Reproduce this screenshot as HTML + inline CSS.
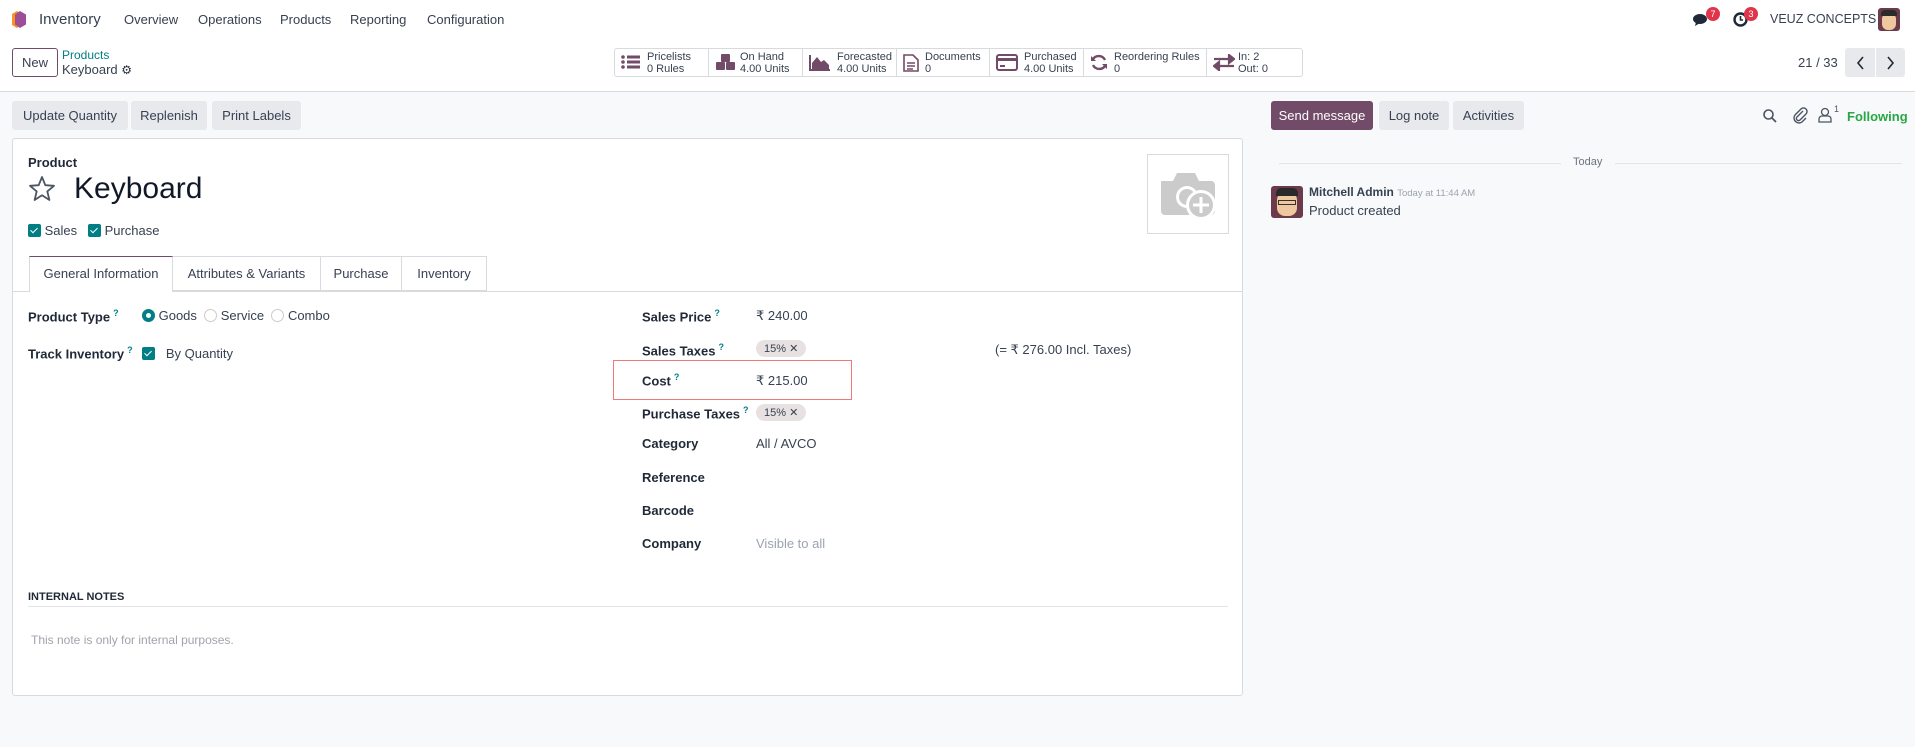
<!DOCTYPE html>
<html><head><meta charset="utf-8"><style>
*{box-sizing:border-box;margin:0;padding:0}
body{width:1915px;height:747px;background:#f8f9fa;font-family:"Liberation Sans",sans-serif;font-size:13px;color:#374151;position:relative;overflow:hidden}
.a{position:absolute;white-space:nowrap}
.top{position:absolute;left:0;top:0;width:1915px;height:92px;background:#fff;border-bottom:1px solid #d8dadd}
.btn{position:absolute;height:29px;line-height:29px;background:#e7e9ed;border-radius:3px;font-size:13px;color:#374151;white-space:nowrap;text-align:center}
.sheet{position:absolute;left:12px;top:138px;width:1231px;height:558px;background:#fff;border:1px solid #d8dadd;border-radius:3px}
.lbl{font-weight:bold;color:#1f2937}
.q{color:#017e84;font-size:9px;vertical-align:super;margin-left:3px}
.cb{display:inline-block;width:13px;height:13px;background:#017e84;border-radius:2px;vertical-align:-2px;position:relative}
.cb:after{content:"";position:absolute;left:4px;top:2px;width:3px;height:6px;border:solid #fff;border-width:0 1.5px 1.5px 0;transform:rotate(45deg)}
.tag{display:inline-block;background:#e8e1e1;border-radius:10px;padding:2px 8px;font-size:11px;color:#374151}
.stat{position:absolute;top:0;height:28px;border-right:1px solid #d8dadd;font-size:11px;line-height:12px;padding-top:2px}
.stat svg{position:absolute;left:6px;top:5px}
.stat div{position:absolute;left:34px;top:2px;color:#374151}
.tab{position:absolute;top:117px;height:35px;border:1px solid #d8dadd;border-left:none;text-align:center;line-height:34px;white-space:nowrap}
</style></head><body>
<div class="top">
<svg class="a" style="left:11px;top:10px" width="16" height="19" viewBox="0 0 16 19"><path d="M6 1 L12 4 V14 L6 18 L1 15 V4Z" fill="#f7931e"/><path d="M9 1 L15 4.5 V14.5 L9 18 L4 14.5 V4.5Z" fill="#9c4f96"/></svg>
<div class="a" style="left:39px;top:11px;font-size:15px;color:#374151">Inventory</div>
<div class="a" style="left:124px;top:12px">Overview</div>
<div class="a" style="left:198px;top:12px">Operations</div>
<div class="a" style="left:280px;top:12px">Products</div>
<div class="a" style="left:350px;top:12px">Reporting</div>
<div class="a" style="left:427px;top:12px">Configuration</div>
<svg class="a" style="left:1693px;top:13px" width="17" height="14" viewBox="0 0 17 14"><ellipse cx="7" cy="6" rx="7" ry="5" fill="#1f2937"/><path d="M3 9 L2 13 L7 10Z" fill="#1f2937"/></svg>
<div class="a" style="left:1706px;top:7px;width:14px;height:14px;border-radius:7px;background:#e0344b;color:#fff;font-size:9px;text-align:center;line-height:14px">7</div>
<svg class="a" style="left:1733px;top:12px" width="15" height="15" viewBox="0 0 15 15"><circle cx="7.5" cy="7.5" r="6" fill="none" stroke="#1f2937" stroke-width="2.4"/><path d="M7.5 4V8H10" stroke="#1f2937" stroke-width="1.6" fill="none"/></svg>
<div class="a" style="left:1744px;top:7px;width:14px;height:14px;border-radius:7px;background:#e0344b;color:#fff;font-size:9px;text-align:center;line-height:14px">3</div>
<div class="a" style="left:1770px;top:12px;font-size:12.5px;color:#374151">VEUZ CONCEPTS</div>
<div class="a" style="left:1878px;top:8px;width:22px;height:23px;border-radius:3px;background:#6b3b4b;overflow:hidden"><div style="position:absolute;left:4px;top:5px;width:14px;height:17px;border-radius:6px;background:#f0c8a0"></div><div style="position:absolute;left:3px;top:2px;width:16px;height:6px;border-radius:4px 4px 0 0;background:#2a2a2a"></div></div>

<div class="a" style="left:12px;top:48px;width:46px;height:29px;border:1px solid #714b67;border-radius:3px;text-align:center;line-height:27px;color:#374151">New</div>
<div class="a" style="left:62px;top:48px;font-size:12px;color:#017e84">Products</div>
<div class="a" style="left:62px;top:62px;font-size:13px">Keyboard <span style="font-size:12px;color:#1f2937">&#9881;</span></div>

<div class="a" style="left:614px;top:48px;width:689px;height:29px;border:1px solid #d8dadd;border-radius:3px">
<div class="stat" style="left:0;width:94px"><svg width="20" height="16"><g fill="#714b67"><circle cx="2" cy="3" r="1.8"/><circle cx="2" cy="8" r="1.8"/><circle cx="2" cy="13" r="1.8"/><rect x="6" y="1.5" width="13" height="3"/><rect x="6" y="6.5" width="13" height="3"/><rect x="6" y="11.5" width="13" height="3"/></g></svg><div style="left:32px">Pricelists<br>0 Rules</div></div>
<div class="stat" style="left:94px;width:94px"><svg width="22" height="18"><g fill="#714b67"><rect x="6" y="0" width="9" height="8" rx="1"/><rect x="1" y="8" width="9" height="8" rx="1"/><rect x="11" y="8" width="9" height="8" rx="1"/></g></svg><div style="left:31px">On Hand<br>4.00 Units</div></div>
<div class="stat" style="left:188px;width:94px"><svg width="22" height="17"><path d="M1 1V16H21" stroke="#714b67" stroke-width="2" fill="none"/><path d="M3 15 L3 9 L8 3 L12 8 L15 6 L20 11 V15Z" fill="#714b67"/></svg><div>Forecasted<br>4.00 Units</div></div>
<div class="stat" style="left:282px;width:93px"><svg width="16" height="18"><path d="M1 1H10L15 6V17H1Z M4 9H12M4 12H12M4 15H10" stroke="#714b67" stroke-width="1.6" fill="none"/></svg><div style="left:28px">Documents<br>0</div></div>
<div class="stat" style="left:375px;width:94px"><svg width="22" height="17"><rect x="1" y="1" width="20" height="15" rx="2" stroke="#714b67" stroke-width="2" fill="none"/><rect x="1" y="4" width="20" height="3" fill="#714b67"/><rect x="4" y="11" width="5" height="2" fill="#714b67"/></svg><div>Purchased<br>4.00 Units</div></div>
<div class="stat" style="left:469px;width:123px"><svg width="18" height="17"><path d="M15 6A7 7 0 0 0 3 5M3 11A7 7 0 0 0 15 12" stroke="#714b67" stroke-width="2.4" fill="none"/><path d="M1 2V7H6Z M17 15V10H12Z" fill="#714b67"/></svg><div style="left:30px">Reordering Rules<br>0</div></div>
<div class="stat" style="left:592px;width:96px;border:none"><svg width="22" height="17"><path d="M1 5H18M21 5L16 1V9Z M21 12H4M1 12L6 8V16Z" stroke="#714b67" stroke-width="2.2" fill="#714b67"/></svg><div style="left:31px">In: 2<br>Out: 0</div></div>
</div>

<div class="a" style="left:1798px;top:55px">21 / 33</div>
<div class="a" style="left:1845px;top:48px;width:30px;height:29px;background:#e7e9ed;border-radius:3px 0 0 3px"></div>
<div class="a" style="left:1876px;top:48px;width:29px;height:29px;background:#e7e9ed;border-radius:0 3px 3px 0"></div>
<svg class="a" style="left:1853px;top:55px" width="50" height="16"><path d="M10 2L5 8L10 14" stroke="#1f2937" stroke-width="1.6" fill="none"/><path d="M35 2L40 8L35 14" stroke="#1f2937" stroke-width="1.6" fill="none"/></svg>
</div>

<div class="btn" style="left:12px;top:101px;width:116px">Update Quantity</div>
<div class="btn" style="left:131px;top:101px;width:76px">Replenish</div>
<div class="btn" style="left:212px;top:101px;width:89px">Print Labels</div>

<div class="btn" style="left:1271px;top:101px;width:102px;background:#714b67;color:#fff">Send message</div>
<div class="btn" style="left:1379px;top:101px;width:70px">Log note</div>
<div class="btn" style="left:1453px;top:101px;width:71px">Activities</div>
<svg class="a" style="left:1762px;top:108px" width="16" height="16"><circle cx="6.5" cy="6.5" r="4.5" stroke="#4b5563" stroke-width="1.6" fill="none"/><path d="M10 10L14 14" stroke="#4b5563" stroke-width="1.8"/></svg>
<svg class="a" style="left:1792px;top:106px" width="16" height="18"><path d="M11 5L5 11A2 2 0 0 0 8 14L14 8A3.5 3.5 0 0 0 9 3L3 9A5 5 0 0 0 10 16L14 12" stroke="#4b5563" stroke-width="1.4" fill="none"/></svg>
<svg class="a" style="left:1818px;top:107px" width="14" height="16"><circle cx="7" cy="5" r="3.5" stroke="#4b5563" stroke-width="1.3" fill="none"/><path d="M1 15V12A3 3 0 0 1 4 9H10A3 3 0 0 1 13 12V15Z" stroke="#4b5563" stroke-width="1.3" fill="none"/></svg>
<div class="a" style="left:1834px;top:104px;font-size:9px;color:#4b5563">1</div>
<div class="a" style="left:1847px;top:109px;color:#28a745;font-weight:bold;font-size:13px">Following</div>

<div class="a" style="left:1279px;top:163px;width:282px;border-top:1px solid #e2e4e7"></div>
<div class="a" style="left:1573px;top:156px;font-size:11px;color:#6b7280">Today</div>
<div class="a" style="left:1615px;top:163px;width:287px;border-top:1px solid #e2e4e7"></div>
<div class="a" style="left:1271px;top:186px;width:32px;height:32px;border-radius:3px;background:#6b3b4b;overflow:hidden"><div style="position:absolute;left:6px;top:6px;width:20px;height:24px;border-radius:8px;background:#f0c8a0"></div><div style="position:absolute;left:5px;top:2px;width:22px;height:8px;border-radius:5px 5px 0 0;background:#2a2a2a"></div><div style="position:absolute;left:7px;top:14px;width:18px;height:5px;border:1.5px solid #333"></div></div>
<div class="a" style="left:1309px;top:185px;font-weight:bold;font-size:12px;color:#374151">Mitchell Admin <span style="font-weight:normal;font-size:9.5px;color:#9ca3af">Today at 11:44 AM</span></div>
<div class="a" style="left:1309px;top:203px;font-size:13px">Product created</div>

<div class="sheet">
<div class="a" style="left:15px;top:16px;font-size:13px;font-weight:bold;color:#1f2937">Product</div>
<svg class="a" style="left:15px;top:36px" width="28" height="27" viewBox="0 0 28 27"><path d="M14 2L17.3 10.2L26 10.8L19.3 16.4L21.4 25L14 20.3L6.6 25L8.7 16.4L2 10.8L10.7 10.2Z" stroke="#4b5563" stroke-width="1.8" fill="none" stroke-linejoin="round"/></svg>
<div class="a" style="left:61px;top:33px;font-size:30px;color:#111827">Keyboard</div>
<div class="a" style="left:15px;top:84px;font-size:13px"><span class="cb"></span> Sales &nbsp; <span class="cb"></span> Purchase</div>
<div class="a" style="left:1134px;top:15px;width:82px;height:80px;border:1px solid #d8dadd"></div>
<svg class="a" style="left:1144px;top:28px" width="64" height="56" viewBox="0 0 64 56"><path d="M4 14H16L20 6H38L42 14H54A4 4 0 0 1 58 18V44A4 4 0 0 1 54 48H8A4 4 0 0 1 4 44Z" fill="#cbcbcb"/><circle cx="30" cy="30" r="11" fill="#fff"/><circle cx="30" cy="30" r="8" fill="#cbcbcb"/><circle cx="44" cy="38" r="15" fill="#fff"/><circle cx="44" cy="38" r="12" fill="#cbcbcb"/><path d="M44 30V46M36 38H52" stroke="#fff" stroke-width="3"/></svg>

<div class="a" style="left:-1px;top:152px;width:1231px;border-top:1px solid #d8dadd"></div>
<div class="a" style="left:16px;top:117px;width:144px;height:36px;background:#fff;border:1px solid #d8dadd;border-top:1px solid #714b67;border-bottom:none;text-align:center;line-height:34px">General Information</div>
<div class="tab" style="left:160px;width:148px">Attributes &amp; Variants</div>
<div class="tab" style="left:308px;width:81px">Purchase</div>
<div class="tab" style="left:389px;width:85px">Inventory</div>

<div class="a lbl" style="left:15px;top:169px">Product Type<span class="q">?</span></div>
<div class="a" style="left:129px;top:169px"><span style="display:inline-block;width:13px;height:13px;border-radius:50%;border:4px solid #017e84;vertical-align:-2px"></span> Goods &nbsp;<span style="display:inline-block;width:13px;height:13px;border-radius:50%;border:1px solid #ccc;vertical-align:-2px"></span> Service &nbsp;<span style="display:inline-block;width:13px;height:13px;border-radius:50%;border:1px solid #ccc;vertical-align:-2px"></span> Combo</div>
<div class="a lbl" style="left:15px;top:206px">Track Inventory<span class="q">?</span></div>
<div class="a" style="left:129px;top:207px"><span class="cb"></span> &nbsp;&nbsp;By Quantity</div>

<div class="a lbl" style="left:629px;top:169px">Sales Price<span class="q">?</span></div>
<div class="a" style="left:743px;top:169px">₹ 240.00</div>
<div class="a lbl" style="left:629px;top:203px">Sales Taxes<span class="q">?</span></div>
<div class="a" style="left:743px;top:201px"><span class="tag">15% ✕</span></div>
<div class="a" style="left:982px;top:203px">(= ₹ 276.00 Incl. Taxes)</div>
<div class="a" style="left:600px;top:221px;width:239px;height:40px;border:1.5px solid #f07878"></div>
<div class="a lbl" style="left:629px;top:233px">Cost<span class="q">?</span></div>
<div class="a" style="left:743px;top:234px">₹ 215.00</div>
<div class="a lbl" style="left:629px;top:266px">Purchase Taxes<span class="q">?</span></div>
<div class="a" style="left:743px;top:265px"><span class="tag">15% ✕</span></div>
<div class="a lbl" style="left:629px;top:297px">Category</div>
<div class="a" style="left:743px;top:297px">All / AVCO</div>
<div class="a lbl" style="left:629px;top:331px">Reference</div>
<div class="a lbl" style="left:629px;top:364px">Barcode</div>
<div class="a lbl" style="left:629px;top:397px">Company</div>
<div class="a" style="left:743px;top:397px;color:#9ca3af">Visible to all</div>

<div class="a" style="left:15px;top:452px;font-size:11px;font-weight:bold;color:#1f2937">INTERNAL NOTES</div>
<div class="a" style="left:15px;top:467px;width:1200px;border-top:1px solid #e2e4e7"></div>
<div class="a" style="left:18px;top:494px;color:#a0a4ab;font-size:12px">This note is only for internal purposes.</div>
</div>
</body></html>
